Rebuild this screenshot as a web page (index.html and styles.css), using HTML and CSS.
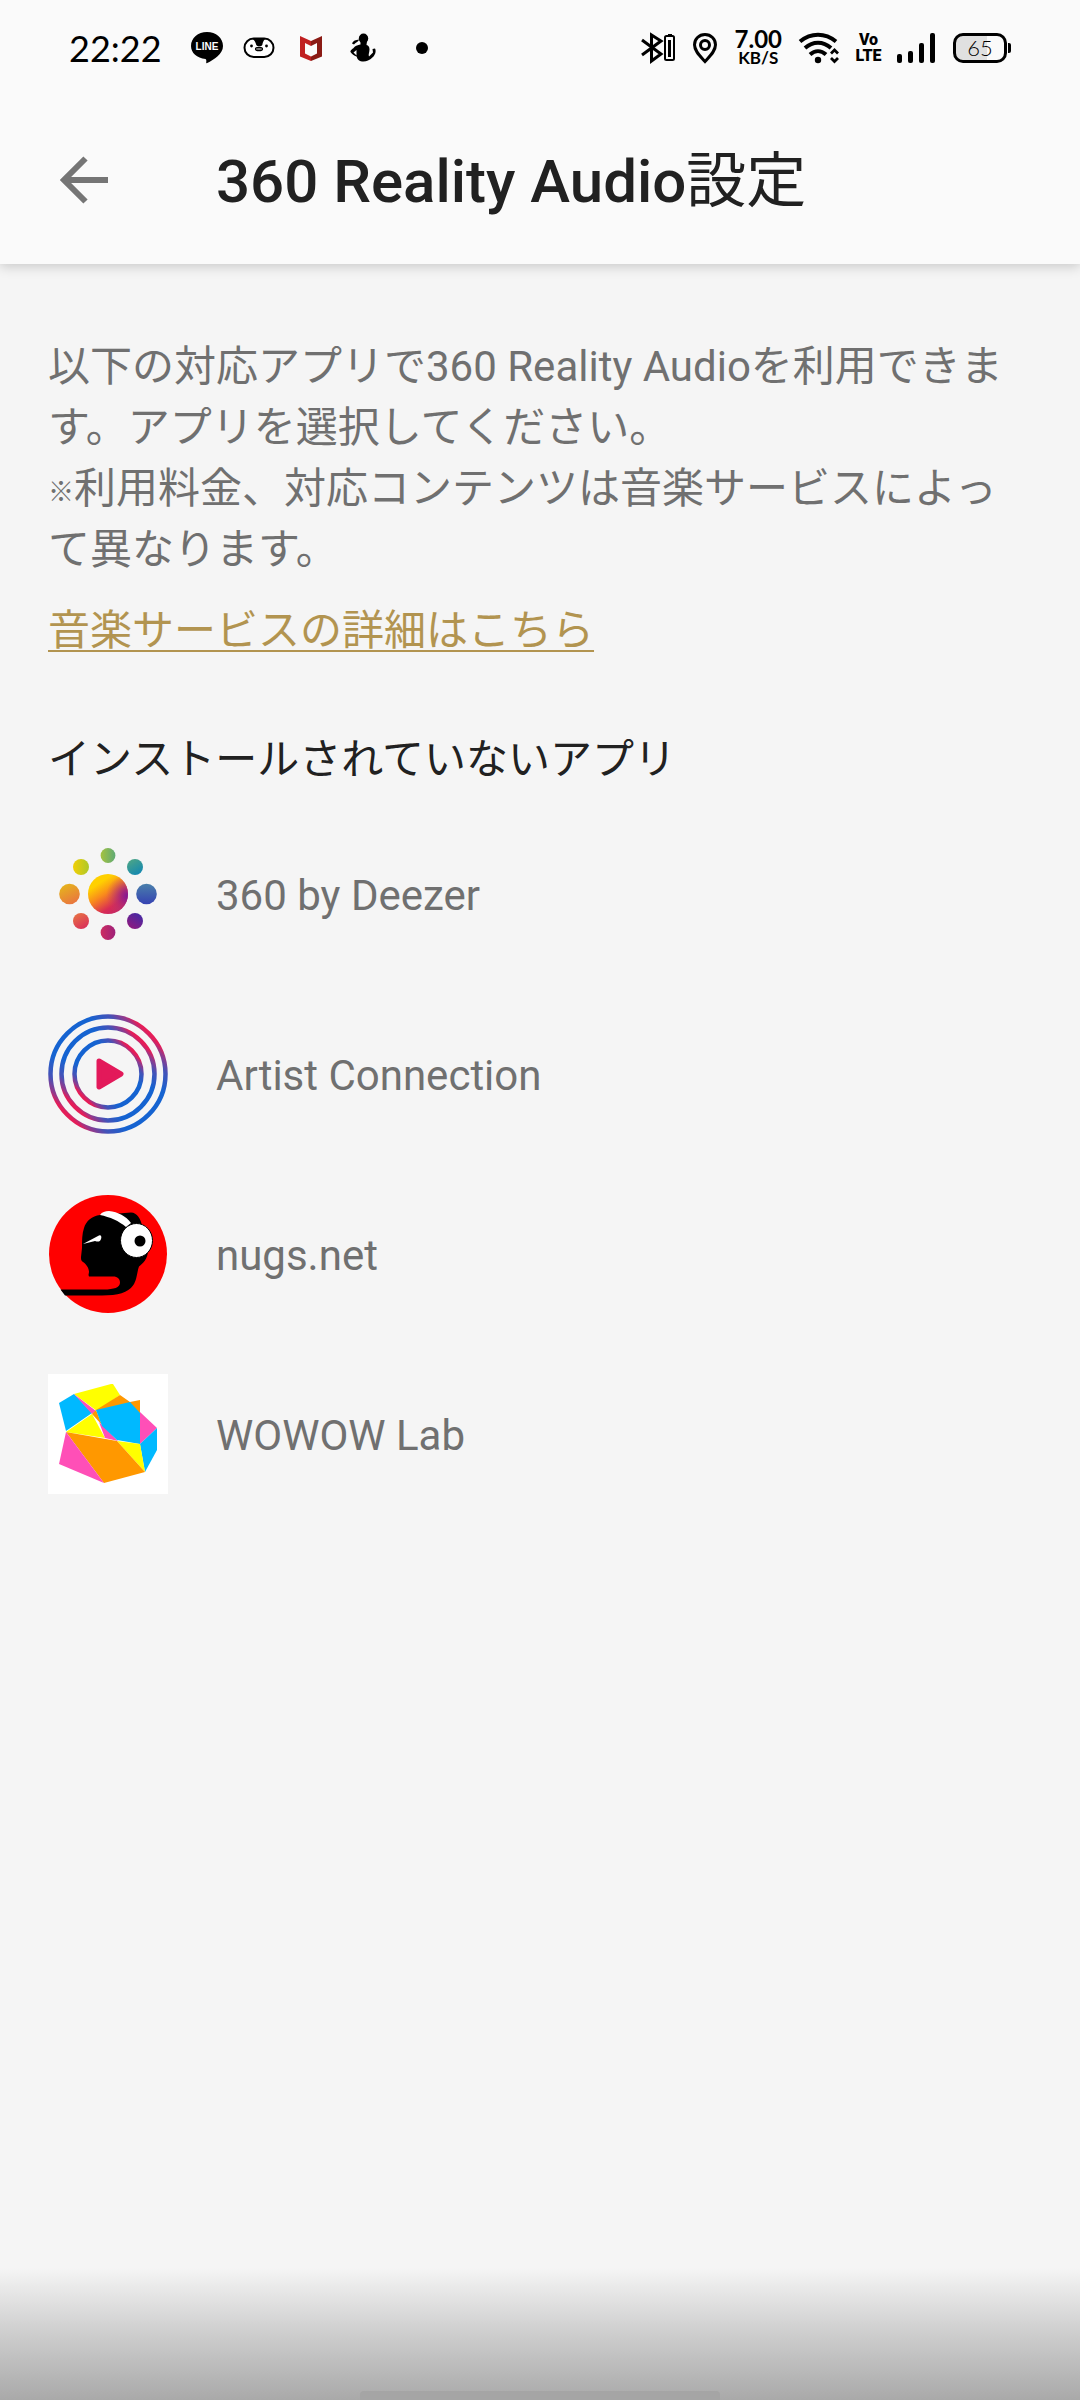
FILE: index.html
```html
<!DOCTYPE html>
<html lang="ja">
<head>
  <meta charset="UTF-8">
  <meta name="viewport" content="width=device-width, initial-scale=1.0">
  <title>360 Reality Audio設定</title>
  <link rel="stylesheet" href="styles.css">
</head>
<body>
  <header class="top">
    <div class="status">
      <div class="status-left">
        <span class="time">22:22</span>
        <div class="slot">
          <svg width="34" height="34" viewBox="0 0 34 34">
            <path d="M17 1C8 1 1 7 1 15c0 7 6 12 14.500 13 .8.3 1 1.500.7 3.500 0 .8.3 1 1 .6C24 28.500 33 23 33 15 33 7 26 1 17 1z"/>
            <text x="17" y="19" text-anchor="middle" class="line-text">LINE</text>
          </svg>
        </div>
        <div class="slot">
          <svg width="32" height="22" viewBox="0 0 32 22">
            <rect x="1.500" y="1.500" width="29" height="18.500" rx="9.200" fill="#fff" stroke="#000" stroke-width="2"/>
            <path d="M8.500 1.500h15c-3 1-3.600 4-4.200 6.500-.7 1.800-5.300 1.800-6 0C12.500 5.500 11.500 2.500 8.500 1.500z"/>
            <circle cx="8.500" cy="9" r="1.400"/><circle cx="23.500" cy="9" r="1.400"/>
            <ellipse cx="16" cy="12" rx="3.500" ry="1.700" fill="#fff" stroke="#000" stroke-width="1.200"/>
            <path d="M13.500 12h5" stroke="#000" stroke-width="1"/>
          </svg>
        </div>
        <div class="slot">
          <svg width="24" height="28" viewBox="0 0 24 28">
            <path d="M1 2l11 5v5L6 9v10.500l6 3V27L1 22.500z" fill="#c01f20"/>
            <path d="M23 2L12 7v5l6-3v10.500l-6 3V27l11-4.500z" fill="#8a1a14"/>
          </svg>
        </div>
        <div class="slot">
          <svg width="28" height="32" viewBox="0 0 28 32">
            <ellipse cx="14.500" cy="6.500" rx="4.700" ry="5"/>
            <path d="M11.500 9h6.500l-.5 4c2 .5 3 2 3 4.500 0 3-1.500 5-.5 7l4-4-.5-3.500 2.500-.5c1.500 3 0 6-1.500 8-2 2-3.500 3-5.500 4-3 1.500-7 1.500-9.500-.5-1.500-1-1.500-3-2-3.500-2.500-1-4.500-2.500-6-4.500C1 18 4 17 6 14.500c1.500-1.500 4-1.500 5.500-2z"/>
            <path d="M3 11.500C4.500 8.500 6.500 8 10 7.500 9.500 10 7 10 5 12.500z"/>
            <path d="M7.500 18l-3 2.500 3 3z" fill="#fafafa"/>
          </svg>
        </div>
        <span class="dot"></span>
      </div>
      <div class="status-right">
        <svg width="36" height="32" viewBox="0 0 36 32">
          <path d="M1 8l19 14-9.500 7V3L20 9 1 23" fill="none" stroke="#000" stroke-width="3"/>
          <rect x="24" y="4" width="9" height="24" rx="1.500" fill="none" stroke="#000" stroke-width="2"/>
          <path d="M27 2h4v2h-4zM27 8h3v17h-3z"/>
        </svg>
        <svg width="26" height="32" viewBox="0 0 26 32">
          <path d="M12 2.500C6 2.500 1.500 7 1.500 12.700 1.500 19 7 24 12 29.500 17 24 22.500 19 22.500 12.700 22.500 7 18 2.500 12 2.500z" fill="none" stroke="#000" stroke-width="3"/>
          <circle cx="12" cy="13" r="4.500" fill="none" stroke="#000" stroke-width="3"/>
        </svg>
        <div class="speed"><span class="speed-num">7.00</span><span class="speed-unit">KB/S</span></div>
        <svg width="42" height="32" viewBox="0 0 42 32">
          <g fill="none" stroke="#000" stroke-width="4">
            <path d="M2 9.500C13 .5 27 .5 38 9.500"/>
            <path d="M7 16c8-7 18-7 26 0"/>
            <path d="M12 22.500c5-4.500 11-4.500 16 0"/>
            <path d="M33 21.500l3.500-3.500 3.500 3.500M33 26l3.500 3.500L40 26" stroke-width="2.800"/>
          </g>
          <circle cx="20" cy="28" r="3.200"/>
        </svg>
        <div class="volte"><span>Vo</span><span>LTE</span></div>
        <svg width="40" height="32" viewBox="0 0 40 32">
          <rect x="0" y="22" width="5" height="9" rx="2"/>
          <rect x="11" y="19" width="5" height="12" rx="2"/>
          <rect x="22" y="11" width="5" height="20" rx="2"/>
          <rect x="33" y="1" width="5" height="30" rx="2"/>
        </svg>
        <div class="battery"><span>65</span></div>
      </div>
    </div>
    <div class="bar">
      <button class="back" type="button" aria-label="戻る">
        <svg width="48" height="48" viewBox="0 0 48 48"><path d="M25.500 2.500L4 24l21.500 21.500M4 24h44" fill="none" stroke="#757575" stroke-width="6"/></svg>
      </button>
      <h1>360 Reality Audio<span class="kanji">設定</span></h1>
    </div>
  </header>

  <main>
    <p class="intro">以下の対応アプリで360 Reality Audioを利用できます。アプリを選択してください。<br><span class="mark">※</span>利用料金、対応コンテンツは音楽サービスによって異なります。</p>
    <a class="more" href="#apps">音楽サービスの詳細はこちら</a>
    <h2>インストールされていないアプリ</h2>

    <ul class="apps" id="apps">
      <li>
        <svg width="120" height="120" viewBox="0 0 120 120">
          <defs>
            <linearGradient id="sun" x1="0.200" y1="0.100" x2="0.750" y2="0.950">
              <stop offset="0.150" stop-color="#ffd000"/><stop offset="0.450" stop-color="#f98a1c"/><stop offset="0.800" stop-color="#d82b55"/><stop offset="1" stop-color="#c42865"/>
            </linearGradient>
            <radialGradient id="sunPurple" cx="1" cy="0.550" r="0.550">
              <stop offset="0" stop-color="#7d1798"/><stop offset="0.300" stop-color="#9c1f84" stop-opacity="0.850"/><stop offset="1" stop-color="#c84060" stop-opacity="0"/>
            </radialGradient>
            <linearGradient id="d1"><stop stop-color="#a5c23f"/><stop offset="1" stop-color="#5faa75"/></linearGradient>
            <linearGradient id="d2" x2="0.600" y2="1"><stop stop-color="#52a882"/><stop offset="1" stop-color="#1689af"/></linearGradient>
            <linearGradient id="d3" x2="0" y2="1"><stop stop-color="#4a80ab"/><stop offset="1" stop-color="#3542b2"/></linearGradient>
            <linearGradient id="d4" x1="1" x2="0.300" y2="1"><stop stop-color="#3b2ba8"/><stop offset="1" stop-color="#8e1a80"/></linearGradient>
            <linearGradient id="d5"><stop stop-color="#cd2c61"/><stop offset="1" stop-color="#9e2179"/></linearGradient>
            <linearGradient id="d6" x2="0.600" y2="1"><stop stop-color="#e87842"/><stop offset="1" stop-color="#da3258"/></linearGradient>
            <linearGradient id="d7" x2="0.500" y2="1"><stop stop-color="#e5bc18"/><stop offset="1" stop-color="#e9793d"/></linearGradient>
            <linearGradient id="d8"><stop stop-color="#f2cf05"/><stop offset="1" stop-color="#adc829"/></linearGradient>
          </defs>
          <circle cx="60" cy="60" r="20" fill="url(#sun)"/>
          <circle cx="60" cy="60" r="20" fill="url(#sunPurple)"/>
          <circle cx="60" cy="21.500" r="7.400" fill="url(#d1)"/>
          <circle cx="87" cy="33" r="8" fill="url(#d2)"/>
          <circle cx="98.500" cy="60" r="10.300" fill="url(#d3)"/>
          <circle cx="87" cy="87" r="8" fill="url(#d4)"/>
          <circle cx="60" cy="98.500" r="7.400" fill="url(#d5)"/>
          <circle cx="33" cy="87" r="8" fill="url(#d6)"/>
          <circle cx="21.500" cy="60" r="10.300" fill="url(#d7)"/>
          <circle cx="33" cy="33" r="8" fill="url(#d8)"/>
        </svg>
        <span>360 by Deezer</span>
      </li>
      <li>
        <svg width="120" height="120" viewBox="0 0 120 120">
          <defs>
            <!-- pink on one diagonal, blue on the other -->
            <linearGradient id="ring" x1="0" y1="1" x2="1" y2="0">
              <stop offset="0" stop-color="#e51d58"/><stop offset="0.150" stop-color="#e51d58"/><stop offset="0.180" stop-color="#96388a"/><stop offset="0.240" stop-color="#4452b8"/><stop offset="0.340" stop-color="#1563d1"/><stop offset="0.660" stop-color="#1563d1"/><stop offset="0.760" stop-color="#4452b8"/><stop offset="0.820" stop-color="#96388a"/><stop offset="0.850" stop-color="#e51d58"/>
            </linearGradient>
          </defs>
          <g fill="none" stroke="url(#ring)" stroke-width="4.500">
            <circle cx="60" cy="60" r="57.500"/>
            <circle cx="60" cy="60" r="46.500"/>
            <circle cx="60" cy="60" r="33.500"/>
          </g>
          <path d="M51 47l22 13-22 13z" fill="#e3195a" stroke="#e3195a" stroke-width="5" stroke-linejoin="round"/>
        </svg>
        <span>Artist Connection</span>
      </li>
      <li>
        <svg width="120" height="120" viewBox="0 0 120 120">
          <circle cx="60" cy="60" r="59" fill="#f00"/>
          <path d="M52 21C44 22 38 27 36 34c-2 6-2 12-2 20l-1 9c0 2 0 4 2 5 3 2 6 6 6 10l-.5 3 .5 1.500h23c5-.5 8 2 8 6 0 5-6 7-16 7H12.500l4.500 6h37c16 0 26-3 31-10 4-5 4-14 6-19 4-3 9-8 9-16l-6-25c-1-6-5-13-11-13z"/>
          <path d="M52 21c2-3 5-4 9-4 9 1 17 5 22 12l-5 4C71 27 62 23 52 21z" fill="#fff"/>
          <path d="M35 50l15-8c3-2 4 1 3 3-1 3-3 3-6 2z" fill="#fff"/>
          <ellipse cx="88.500" cy="46.500" rx="16" ry="17" fill="#fff" stroke="#000"/>
          <circle cx="92" cy="47" r="5.500"/>
        </svg>
        <span>nugs.net</span>
      </li>
      <li>
        <svg width="120" height="120" viewBox="0 0 120 120">
          <path d="M0 0h120v120H0z" fill="#fff"/>
          <path d="M26 20l37-10h2l7 11-23 16z" fill="#ff0"/>
          <path d="M11 29l15-9 18 19-26 18z" fill="#00b9ff"/>
          <path d="M26 20l22 17-4 3z" fill="#ff4fb7"/>
          <path d="M48 36l24-15 10 7 10-2v13z" fill="#ff9800"/>
          <path d="M18 58l26-18 13 24z" fill="#ff0"/>
          <path d="M44 40l4-4 6 15z" fill="#ff9800"/>
          <path d="M51 48l19 19-13-3z" fill="#ff4fb7"/>
          <path d="M48 36l34-8 10 11v31l-23-4-15-14z" fill="#00b9ff"/>
          <path d="M92 38l17 16-17 16z" fill="#ff4fb7"/>
          <path d="M109 54v22L97 98l-5-28z" fill="#00b9ff"/>
          <path d="M69 67l23 3 5 28z" fill="#ff0"/>
          <path d="M18 58l51 9 28 31-41 11z" fill="#ff9800"/>
          <path d="M18 58l38 51-45-19z" fill="#ff4fb7"/>
        </svg>
        <span>WOWOW Lab</span>
      </li>
    </ul>
  </main>

  <footer class="nav-fade"><div class="handle"></div></footer>
</body>
</html>
```
FILE: styles.css
```css
* { margin: 0; padding: 0; box-sizing: border-box; }
body { min-height: 100vh; display: flex; flex-direction: column; background: #f5f5f5; color: #707070; font-family: Roboto, "Noto Sans CJK JP", sans-serif; font-size: 42px; }
svg { display: block; flex: none; }

.top { background: #fafafa; box-shadow: 0 2px 12px rgba(0,0,0,0.2); }
.status { height: 96px; padding: 0 73px 0 69px; display: flex; justify-content: space-between; align-items: center; color: #000; font-family: Lato, sans-serif; }
.status-left, .status-right { display: flex; align-items: center; }
.status-right { gap: 16px; }
.time { min-width: 112px; font-size: 36px; line-height: 44px; }
.slot { width: 52px; display: flex; justify-content: center; }
.line-text { font-family: "Liberation Sans", sans-serif; font-size: 10px; font-weight: bold; fill: #fff; }
.dot { width: 12px; height: 12px; border-radius: 50%; background: #000; margin-left: 27px; }
.speed { display: flex; flex-direction: column; align-items: center; }
.speed-num { font-size: 24px; line-height: 20px; font-weight: bold; }
.speed-unit { font-size: 17px; line-height: 18px; font-weight: bold; }
.volte { width: 25px; display: flex; flex-direction: column; align-items: center; font-family: Roboto, sans-serif; font-size: 16px; line-height: 16px; font-weight: 900; }
.battery { position: relative; width: 54px; height: 30px; border: 3px solid #000; border-radius: 10px; background: linear-gradient(to right, #e0e0e0 65%, #fafafa 65%); text-align: center; font-size: 22px; line-height: 24px; font-weight: 300; }
.battery::after { content: ""; position: absolute; right: -7px; top: 7px; width: 3px; height: 10px; border-radius: 0 2px 2px 0; background: #000; }

.bar { height: 168px; padding: 0 48px; display: flex; align-items: center; }
.back { width: 72px; height: 72px; margin-right: 96px; display: flex; align-items: center; justify-content: center; background: none; border: none; cursor: pointer; }
h1 { padding-top: 4px; font-size: 60px; line-height: 80px; font-weight: 500; color: #212121; }
.kanji { font-weight: 400; }

main { flex: 1; padding: 72px 48px 0; }
.intro { line-height: 61px; }
.mark { font-size: 26px; line-height: 26px; font-weight: 900; vertical-align: middle; }
.more { display: inline-block; margin-top: 20px; line-height: 61px; color: #b29450; text-decoration: underline; text-decoration-thickness: 2px; text-underline-offset: 5px; }
h2 { margin-top: 68px; font-size: 42px; line-height: 61px; font-weight: 400; color: #212121; }
.apps { list-style: none; margin-top: 14px; }
.apps li { height: 180px; display: flex; align-items: center; gap: 48px; }
.apps span { padding-top: 2px; }

.nav-fade { height: 132px; display: flex; justify-content: center; align-items: flex-end; background: linear-gradient(#f5f5f5, #d1d1d1 45%, #a9a9a9); }
.handle { width: 33.333%; height: 9px; border-radius: 4px 4px 0 0; background: #a5a5a5; }
```
